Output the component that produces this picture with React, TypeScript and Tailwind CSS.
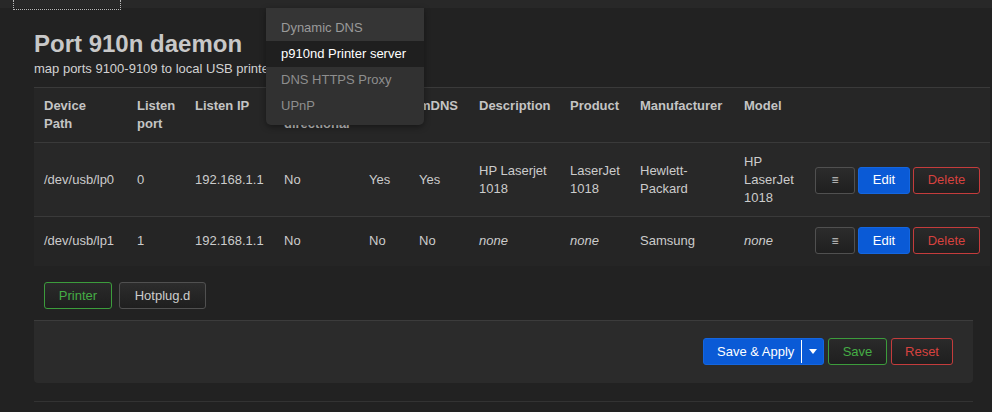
import React from "react";

const font = "font-['Liberation_Sans',Arial,sans-serif]";

const th =
  "px-[10px] pt-[9px] pb-[9px] text-left align-top font-bold text-[13px] leading-[18px] text-[#c4c4c4] whitespace-nowrap";
const td1 =
  "px-[10px] pt-[10px] pb-[9px] align-middle text-[13px] leading-[18px] text-[#cccccc] whitespace-nowrap";
const td2 =
  "px-[10px] pt-[10px] pb-[12px] align-middle text-[13px] leading-[18px] text-[#cccccc] whitespace-nowrap";

function Actions() {
  return (
    <div className="flex gap-[3px]">
      <button className="h-[27px] w-[40px] rounded-[3px] border border-[#505050] bg-linear-to-b from-[#2c2c2c] to-[#1f1f1f] text-[12px] leading-none text-[#c8c8c8] flex items-center justify-center">
        ≡
      </button>
      <button className="h-[27px] w-[52px] rounded-[3px] border border-[#1466e0] bg-[#0a5ad6] text-[13px] text-white flex items-center justify-center">
        Edit
      </button>
      <button className="h-[27px] w-[67px] rounded-[3px] border border-[#c43c3c] bg-linear-to-b from-[#2a2a2a] to-[#1f1f1f] text-[13px] text-[#d6423f] flex items-center justify-center">
        Delete
      </button>
    </div>
  );
}

export default function App() {
  return (
    <div className={`${font} relative min-h-[412px] bg-[#222222] overflow-hidden`}>
      {/* top bar */}
      <div className="relative h-[8px] bg-[#282828]">
        <div className="absolute left-[13px] top-0 w-[108px] h-[10px] border-l border-r border-b border-dotted border-[#b8b8b8]" />
      </div>

      <div className="ml-[34px] mr-[19px] pt-[22px]">
        <h2 className="text-[24px] leading-[28px] font-bold text-[#c8c8c8]">Port 910n daemon</h2>
        <p className="mt-[2px] text-[13px] leading-[18px] text-[#d2d2d2]">
          map ports 9100-9109 to local USB printers
        </p>

        <table className="mt-[9px] w-[956px] table-fixed border-collapse">
          <colgroup>
            <col className="w-[93px]" />
            <col className="w-[58px]" />
            <col className="w-[89px]" />
            <col className="w-[85px]" />
            <col className="w-[50px]" />
            <col className="w-[60px]" />
            <col className="w-[91px]" />
            <col className="w-[70px]" />
            <col className="w-[104px]" />
            <col className="w-[71px]" />
            <col className="w-[185px]" />
          </colgroup>
          <thead>
            <tr className="bg-[#262626] border-t border-b border-[#3a3a3a]">
              <th className={th}>
                Device
                <br />
                Path
              </th>
              <th className={th}>
                Listen
                <br />
                port
              </th>
              <th className={th}>Listen IP</th>
              <th className={th}>
                Bi-
                <br />
                directional
              </th>
              <th className={th}>Root</th>
              <th className={th}>mDNS</th>
              <th className={th}>Description</th>
              <th className={th}>Product</th>
              <th className={th}>Manufacturer</th>
              <th className={th}>Model</th>
              <th className={th}></th>
            </tr>
          </thead>
          <tbody>
            <tr className="bg-[#282828] border-b border-[#3a3a3a]">
              <td className={td1}>/dev/usb/lp0</td>
              <td className={td1}>0</td>
              <td className={td1}>192.168.1.1</td>
              <td className={td1}>No</td>
              <td className={td1}>Yes</td>
              <td className={td1}>Yes</td>
              <td className={td1}>
                HP Laserjet
                <br />
                1018
              </td>
              <td className={td1}>
                LaserJet
                <br />
                1018
              </td>
              <td className={td1}>
                Hewlett-
                <br />
                Packard
              </td>
              <td className={td1}>
                HP
                <br />
                LaserJet
                <br />
                1018
              </td>
              <td className={td1}>
                <Actions />
              </td>
            </tr>
            <tr className="bg-[#252525]">
              <td className={td2}>/dev/usb/lp1</td>
              <td className={td2}>1</td>
              <td className={td2}>192.168.1.1</td>
              <td className={td2}>No</td>
              <td className={td2}>No</td>
              <td className={td2}>No</td>
              <td className={`${td2} italic`}>none</td>
              <td className={`${td2} italic`}>none</td>
              <td className={td2}>Samsung</td>
              <td className={`${td2} italic`}>none</td>
              <td className={td2}>
                <Actions />
              </td>
            </tr>
          </tbody>
        </table>

        {/* tabs */}
        <div className="mt-[16px] ml-[10px] flex gap-[7px]">
          <button className="h-[27px] w-[68px] rounded-[3px] border border-[#3c9c3c] bg-linear-to-b from-[#2a2a2a] to-[#1f1f1f] text-[13px] text-[#45ad45] flex items-center justify-center">
            Printer
          </button>
          <button className="h-[27px] w-[87px] rounded-[3px] border border-[#505050] bg-linear-to-b from-[#2c2c2c] to-[#1f1f1f] text-[13px] text-[#cccccc] flex items-center justify-center">
            Hotplug.d
          </button>
        </div>

        {/* footer actions */}
        <div className="mt-[11px] border-t border-[#3c3c3c] bg-[#2b2b2b] rounded-b-[4px] pt-[17px] pb-[18px] pr-[20px] flex justify-end gap-[4px]">
          <div className="h-[27px] w-[121px] rounded-[3px] bg-[#0a5ad6] border border-[#1466e0] flex items-stretch text-white text-[13px]">
            <span className="flex-1 flex items-center pl-[13px]">Save &amp; Apply</span>
            <span className="my-[1px] w-px bg-white" />
            <span className="w-[21px] flex items-center justify-center">
              <svg width="8" height="5" viewBox="0 0 8 5">
                <path d="M0 0 L8 0 L4 5 Z" fill="#ffffff" />
              </svg>
            </span>
          </div>
          <button className="h-[27px] w-[59px] rounded-[3px] border border-[#3c9c3c] bg-linear-to-b from-[#2a2a2a] to-[#1f1f1f] text-[13px] text-[#45ad45] flex items-center justify-center">
            Save
          </button>
          <button className="h-[27px] w-[62px] rounded-[3px] border border-[#c43c3c] bg-linear-to-b from-[#2a2a2a] to-[#1f1f1f] text-[13px] text-[#d6423f] flex items-center justify-center">
            Reset
          </button>
        </div>

        <div className="mt-[18px] border-t border-[#333333]" />
      </div>

      {/* dropdown menu */}
      <div className="absolute left-[266px] top-[8px] w-[158px] bg-[#313131] rounded-b-[5px] pb-[6px] shadow-[0_2px_6px_rgba(0,0,0,0.4)] text-[13px]">
        <div className="h-[33px] pt-[7px] pl-[15px] leading-[26px] bg-[#353535] text-[#9a9a9a]">Dynamic DNS</div>
        <div className="h-[26px] pl-[15px] leading-[26px] bg-[#1f1f1f] text-white">p910nd Printer server</div>
        <div className="h-[26px] pl-[15px] leading-[26px] text-[#8e8e8e]">DNS HTTPS Proxy</div>
        <div className="h-[26px] pl-[15px] leading-[26px] text-[#8e8e8e]">UPnP</div>
      </div>
    </div>
  );
}
